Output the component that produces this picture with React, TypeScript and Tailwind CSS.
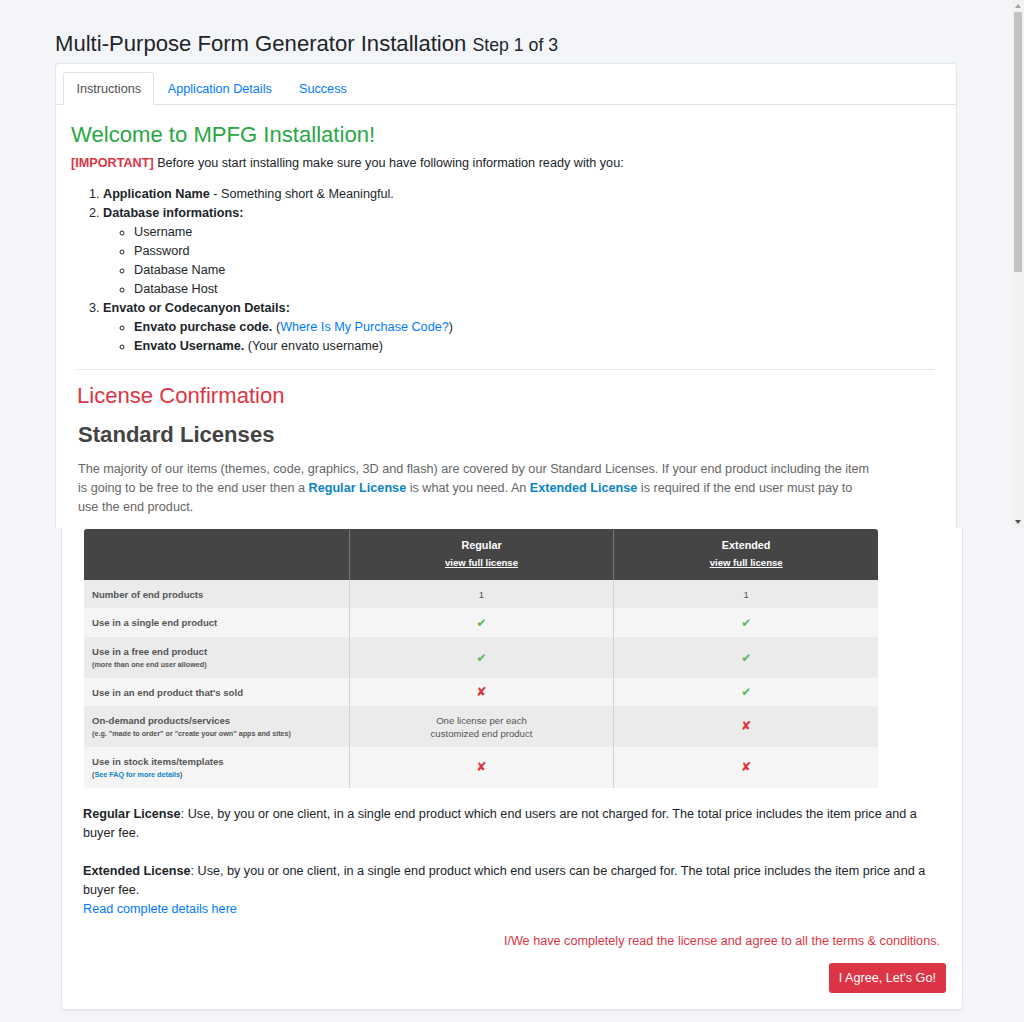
import React from "react";

const Check = () => (
  <span className="font-['DejaVu_Sans',sans-serif] text-[12px] leading-none text-[#5cb85c]">✔</span>
);
const Cross = () => (
  <span className="font-['DejaVu_Sans',sans-serif] text-[12.5px] leading-none text-[#d9363e] font-bold">✘</span>
);

type Row = {
  label: string;
  sub?: React.ReactNode;
  reg: React.ReactNode;
  ext: React.ReactNode;
  h: string;
  bg: string;
};

const rows: Row[] = [
  { label: "Number of end products", reg: "1", ext: "1", h: "h-[28px]", bg: "bg-[#ebebeb]" },
  { label: "Use in a single end product", reg: <Check />, ext: <Check />, h: "h-[29px]", bg: "bg-[#f5f5f5]" },
  {
    label: "Use in a free end product",
    sub: "(more than one end user allowed)",
    reg: <Check />,
    ext: <Check />,
    h: "h-[41px]",
    bg: "bg-[#ebebeb]",
  },
  { label: "Use in an end product that's sold", reg: <Cross />, ext: <Check />, h: "h-[28px]", bg: "bg-[#f5f5f5]" },
  {
    label: "On-demand products/services",
    sub: '(e.g. "made to order" or "create your own" apps and sites)',
    reg: (
      <span className="text-[9.6px] leading-[13px] text-[#555] text-center">
        One license per each
        <br />
        customized end product
      </span>
    ),
    ext: <Cross />,
    h: "h-[41px]",
    bg: "bg-[#ebebeb]",
  },
  {
    label: "Use in stock items/templates",
    sub: (
      <>
        (<span className="text-[#0a84c6]">See FAQ for more details</span>)
      </>
    ),
    reg: <Cross />,
    ext: <Cross />,
    h: "h-[41px]",
    bg: "bg-[#f5f5f5]",
  },
];

function Scrollbar() {
  return (
    <div className="w-[12px] h-[528px] bg-[#f1f1f1] flex flex-col items-center">
      <div className="h-[12px] flex items-center justify-center">
        <div className="w-0 h-0 border-l-[3px] border-r-[3px] border-b-[4px] border-l-transparent border-r-transparent border-b-[#a3a3a3]" />
      </div>
      <div className="w-[8px] h-[260px] bg-[#c1c1c1]" />
      <div className="flex-1" />
      <div className="h-[12px] flex items-center justify-center">
        <div className="w-0 h-0 border-l-[3px] border-r-[3px] border-t-[4px] border-l-transparent border-r-transparent border-t-[#505050]" />
      </div>
    </div>
  );
}

export default function App() {
  return (
    <div className="w-[1024px] h-[1022px] overflow-hidden bg-[#f4f5f8] font-['Liberation_Sans',Arial,sans-serif] text-[12.65px] leading-[19px] text-[#212529]">
      {/* top viewport frame */}
      <div className="flex h-[528px]">
        <div className="w-[1012px] h-[528px] overflow-hidden">
          <div className="w-[902px] mx-auto pt-[30.5px]">
            <h3 className="text-[22.1px] leading-[1.2] mb-[6.4px] text-[#212529]">
              Multi-Purpose Form Generator Installation{" "}
              <small className="text-[17.7px]">Step 1 of 3</small>
            </h3>
            <div className="bg-white border border-b-0 border-[#e3e6ea] rounded-t-[4px] pb-[40px]">
              {/* tabs */}
              <div className="pt-[8px] px-[7px] border-b border-[#dee2e6] flex">
                <div className="h-[33px] mb-[-1px] px-[12.4px] pt-[1px] border border-[#dee2e6] border-b-white rounded-t-[3px] bg-white text-[#495057] flex items-center">
                  Instructions
                </div>
                <div className="h-[33px] mb-[-1px] px-[12.4px] pt-[1px] border border-transparent text-[#007bff] flex items-center">
                  Application Details
                </div>
                <div className="h-[33px] mb-[-1px] px-[12.8px] pt-[1px] border border-transparent text-[#007bff] flex items-center">
                  Success
                </div>
              </div>
              <div className="pl-[15px] pr-[16px] pt-[17px]">
                <h3 className="text-[22.1px] leading-[1.2] text-[#28a745] mb-[5.5px]">
                  Welcome to MPFG Installation!
                </h3>
                <p className="mb-[12px]">
                  <span className="font-bold text-[#dc3545]">[IMPORTANT]</span> Before you start installing make
                  sure you have following information ready with you:
                </p>
                <ol className="list-decimal pl-[32px]">
                  <li>
                    <b>Application Name</b> - Something short &amp; Meaningful.
                  </li>
                  <li>
                    <b>Database informations:</b>
                    <ul className="list-[circle] pl-[31px]">
                      <li>Username</li>
                      <li>Password</li>
                      <li>Database Name</li>
                      <li>Database Host</li>
                    </ul>
                  </li>
                  <li>
                    <b>Envato or Codecanyon Details:</b>
                    <ul className="list-[circle] pl-[31px]">
                      <li>
                        <b>Envato purchase code.</b> (
                        <span className="text-[#007bff]">Where Is My Purchase Code?</span>)
                      </li>
                      <li>
                        <b>Envato Username.</b> (Your envato username)
                      </li>
                    </ul>
                  </li>
                </ol>
                <div className="pl-[6px] pr-[6px]">
                  <div className="mt-[12.5px] border-t border-[#e6e6e6]" />
                  <h3 className="mt-[13.5px] text-[22.1px] leading-[1.2] text-[#dc3545]">License Confirmation</h3>
                  <h3 className="mt-[12px] pl-[1px] text-[22.1px] leading-[1.2] font-bold text-[#444]">
                    Standard Licenses
                  </h3>
                  <p className="mt-[12px] pl-[1px] w-[794px] text-[#666]">
                    The majority of our items (themes, code, graphics, 3D and flash) are covered by our Standard
                    Licenses. If your end product including the item is going to be free to the end user then a{" "}
                    <b className="text-[#0a84c6]">Regular License</b> is what you need. An{" "}
                    <b className="text-[#0a84c6]">Extended License</b> is required if the end user must pay to use
                    the end product.
                  </p>
                </div>
              </div>
            </div>
          </div>
        </div>
        <Scrollbar />
      </div>

      {/* continuation */}
      <div className="w-[1024px]">
        <div className="w-[902px] mx-auto bg-white border border-t-0 border-[#e3e6ea] rounded-b-[4px] shadow-[0_1px_2px_rgba(0,0,0,0.06)] px-[16px] pb-[16px]">
          <div className="pl-[5px] pr-[6px] pt-[1px]">
            <div className="ml-[1px] w-[794px] rounded-[3px] overflow-hidden">
              <div className="grid grid-cols-3 h-[51px] bg-[#454545] text-white font-bold">
                <div />
                <div className="border-l border-[#777] flex flex-col items-center pt-[9px]">
                  <div className="text-[10.8px] leading-[14px]">Regular</div>
                  <div className="text-[9.6px] leading-[12px] underline mt-[5px]">view full license</div>
                </div>
                <div className="border-l border-[#777] flex flex-col items-center pt-[9px]">
                  <div className="text-[10.8px] leading-[14px]">Extended</div>
                  <div className="text-[9.6px] leading-[12px] underline mt-[5px]">view full license</div>
                </div>
              </div>
              {rows.map((r, i) => (
                <div key={i} className={`grid grid-cols-3 ${r.h} ${r.bg}`}>
                  <div className="pl-[8px] flex flex-col justify-center text-[#555] font-bold">
                    <div className="text-[9.6px] leading-[13px]">{r.label}</div>
                    {r.sub && <div className="text-[7.2px] leading-[11px] mt-[1px]">{r.sub}</div>}
                  </div>
                  <div className="border-l border-[#d2d2d2] flex items-center justify-center text-[9.6px] text-[#555]">
                    {r.reg}
                  </div>
                  <div className="border-l border-[#d2d2d2] flex items-center justify-center text-[9.6px] text-[#555]">
                    {r.ext}
                  </div>
                </div>
              ))}
            </div>
            <p className="mt-[16.5px]">
              <b>Regular License</b>: Use, by you or one client, in a single end product which end users are not
              charged for. The total price includes the item price and a buyer fee.
              <br />
              <br />
              <b>Extended License</b>: Use, by you or one client, in a single end product which end users can be
              charged for. The total price includes the item price and a buyer fee.
              <br />
              <span className="text-[#007bff]">Read complete details here</span>
            </p>
            <p className="mt-[13px] text-right text-[#dc3545]">
              I/We have completely read the license and agree to all the terms &amp; conditions.
            </p>
          </div>
          <div className="flex justify-end mt-[12.5px]">
            <button className="h-[30px] px-[10px] rounded-[3px] bg-[#dc3545] text-white text-[12.65px]">
              I Agree, Let's Go!
            </button>
          </div>
        </div>
      </div>
    </div>
  );
}
